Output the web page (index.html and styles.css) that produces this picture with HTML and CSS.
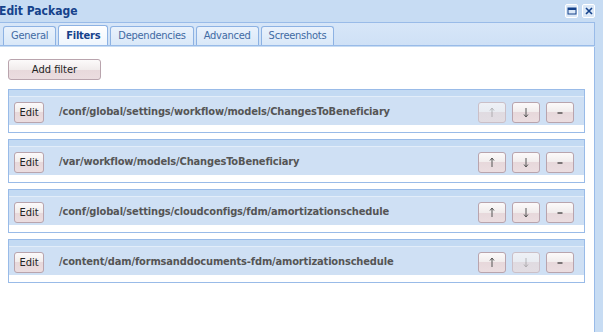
FILE: index.html
```html
<!doctype html>
<html lang="en">
<head>
    <meta charset="utf-8">
    <title>Edit Package</title>
    <link rel="stylesheet" href="styles.css">
</head>
<body>
<div class="window">
    <div class="titlebar">
        <span class="title">Edit Package</span>
        <div class="tools">
            <span class="tool">
                <svg width="10" height="8" viewBox="0 0 10 8"><rect x="1" y="1" width="8" height="6" fill="none" stroke="#15428b" stroke-width="1"/><rect x="1" y="1" width="8" height="2" fill="#15428b"/></svg>
            </span>
            <span class="tool">
                <svg width="10" height="10" viewBox="0 0 10 10"><path d="M2 2 L8 8 M8 2 L2 8" stroke="#15428b" stroke-width="1.6"/></svg>
            </span>
        </div>
    </div>
    <div class="tabs">
        <div class="tab">General</div>
        <div class="tab active">Filters</div>
        <div class="tab">Dependencies</div>
        <div class="tab">Advanced</div>
        <div class="tab">Screenshots</div>
    </div>
    <div class="content">
        <button class="btn add-btn">Add filter</button>

        <div class="filter">
            <div class="filter-head"></div>
            <div class="filter-row">
                <button class="btn edit-btn">Edit</button>
                <span class="path">/conf/global/settings/workflow/models/ChangesToBeneficiary</span>
                <div class="actions">
                    <button class="btn arrow-btn disabled"><svg width="8" height="11" viewBox="0 0 8 11"><path d="M4 1 V10 M2 3.5 L4 1 L6 3.5" fill="none" stroke="#555" stroke-width="1"/></svg></button>
                    <button class="btn arrow-btn"><svg width="8" height="11" viewBox="0 0 8 11"><path d="M4 1 V10 M2 7.5 L4 10 L6 7.5" fill="none" stroke="#555" stroke-width="1"/></svg></button>
                    <button class="btn arrow-btn"><svg width="8" height="11" viewBox="0 0 8 11"><path d="M1.5 6 H6.5" stroke="#333" stroke-width="1.2"/></svg></button>
                </div>
            </div>
        </div>

        <div class="filter">
            <div class="filter-head"></div>
            <div class="filter-row">
                <button class="btn edit-btn">Edit</button>
                <span class="path">/var/workflow/models/ChangesToBeneficiary</span>
                <div class="actions">
                    <button class="btn arrow-btn"><svg width="8" height="11" viewBox="0 0 8 11"><path d="M4 1 V10 M2 3.5 L4 1 L6 3.5" fill="none" stroke="#555" stroke-width="1"/></svg></button>
                    <button class="btn arrow-btn"><svg width="8" height="11" viewBox="0 0 8 11"><path d="M4 1 V10 M2 7.5 L4 10 L6 7.5" fill="none" stroke="#555" stroke-width="1"/></svg></button>
                    <button class="btn arrow-btn"><svg width="8" height="11" viewBox="0 0 8 11"><path d="M1.5 6 H6.5" stroke="#333" stroke-width="1.2"/></svg></button>
                </div>
            </div>
        </div>

        <div class="filter">
            <div class="filter-head"></div>
            <div class="filter-row">
                <button class="btn edit-btn">Edit</button>
                <span class="path">/conf/global/settings/cloudconfigs/fdm/amortizationschedule</span>
                <div class="actions">
                    <button class="btn arrow-btn"><svg width="8" height="11" viewBox="0 0 8 11"><path d="M4 1 V10 M2 3.5 L4 1 L6 3.5" fill="none" stroke="#555" stroke-width="1"/></svg></button>
                    <button class="btn arrow-btn"><svg width="8" height="11" viewBox="0 0 8 11"><path d="M4 1 V10 M2 7.5 L4 10 L6 7.5" fill="none" stroke="#555" stroke-width="1"/></svg></button>
                    <button class="btn arrow-btn"><svg width="8" height="11" viewBox="0 0 8 11"><path d="M1.5 6 H6.5" stroke="#333" stroke-width="1.2"/></svg></button>
                </div>
            </div>
        </div>

        <div class="filter">
            <div class="filter-head"></div>
            <div class="filter-row">
                <button class="btn edit-btn">Edit</button>
                <span class="path">/content/dam/formsanddocuments-fdm/amortizationschedule</span>
                <div class="actions">
                    <button class="btn arrow-btn"><svg width="8" height="11" viewBox="0 0 8 11"><path d="M4 1 V10 M2 3.5 L4 1 L6 3.5" fill="none" stroke="#555" stroke-width="1"/></svg></button>
                    <button class="btn arrow-btn disabled"><svg width="8" height="11" viewBox="0 0 8 11"><path d="M4 1 V10 M2 7.5 L4 10 L6 7.5" fill="none" stroke="#555" stroke-width="1"/></svg></button>
                    <button class="btn arrow-btn"><svg width="8" height="11" viewBox="0 0 8 11"><path d="M1.5 6 H6.5" stroke="#333" stroke-width="1.2"/></svg></button>
                </div>
            </div>
        </div>
    </div>
</div>
</body>
</html>
```

FILE: styles.css
```css
body {
    margin: 0;
    overflow: hidden;
    font-family: "DejaVu Sans Condensed", "DejaVu Sans", sans-serif;
    font-size: 11px;
}

.window {
    width: 603px;
    height: 332px;
    background: #c7dcf3;
    display: flex;
    flex-direction: column;
}

.titlebar {
    height: 22px;
    display: flex;
    align-items: center;
    justify-content: space-between;
    padding-right: 8px;
}

.title {
    margin-left: -1px;
    font-weight: bold;
    font-size: 12px;
    color: #15428b;
}

.tools {
    display: flex;
    gap: 4px;
}

.tool {
    width: 11px;
    height: 12px;
    border: 1px solid #fff;
    border-radius: 2px;
    background: #dbe8f7;
    display: flex;
    align-items: center;
    justify-content: center;
}

.tabs {
    height: 20px;
    margin-right: 8px;
    padding: 2px 0 0 3px;
    border-top: 1px solid #99bbe8;
    border-right: 1px solid #99bbe8;
    border-bottom: 1px solid #99bbe8;
    background: linear-gradient(#d7e6f8, #cfe1f6);
    display: flex;
    align-items: flex-end;
    gap: 2px;
}

.tab {
    height: 18px;
    padding: 0 7px;
    border: 1px solid #8db2e3;
    border-bottom: none;
    border-radius: 3px 3px 0 0;
    background: linear-gradient(#eaf2fc, #d9e8f8);
    color: #416aa3;
    line-height: 18px;
    letter-spacing: -0.25px;
}

.tab.active {
    height: 19px;
    line-height: 20px;
    background: linear-gradient(#ffffff, #eef5fd);
    color: #15428b;
    font-weight: bold;
}

.content {
    flex: 1;
    margin: 1px 8px 0 0;
    padding: 12px 10px 0 8px;
    background: #fff;
    border-right: 1px solid #99bbe8;
}

.btn {
    height: 21px;
    padding: 0;
    border: 1px solid #b9a4ad;
    border-radius: 3px;
    background: linear-gradient(#fcfafa 0%, #f1ecec 50%, #e7d8db 50%, #ebdde0 100%);
    font-family: "DejaVu Sans Condensed", "DejaVu Sans", sans-serif;
    font-size: 11px;
    color: #222;
    display: flex;
    align-items: center;
    justify-content: center;
}

.add-btn {
    width: 93px;
    margin-bottom: 9px;
}

.filter {
    width: 575px;
    height: 42px;
    margin-bottom: 6px;
    border: 1px solid #99bbe8;
    background: #fff;
}

.filter-head {
    height: 6px;
    background: #c3daf3;
    border-bottom: 1px solid #e2edf9;
}

.filter-row {
    height: 28px;
    padding: 0 10px 0 5px;
    background: #cfe0f4;
    display: flex;
    align-items: center;
}

.edit-btn {
    width: 30px;
    margin-top: 2px;
}

.path {
    margin-left: 15px;
    font-weight: bold;
    color: #555;
    letter-spacing: -0.15px;
    flex: 1;
}

.actions {
    display: flex;
    gap: 6px;
    margin-top: 2px;
}

.arrow-btn {
    width: 28px;
}

.arrow-btn.disabled {
    border-color: #cbbfc7;
    background: linear-gradient(#eef1f6 0%, #e8ebf1 50%, #e0dbe1 50%, #e2dde3 100%);
}

.arrow-btn.disabled svg {
    opacity: 0.35;
}
```
